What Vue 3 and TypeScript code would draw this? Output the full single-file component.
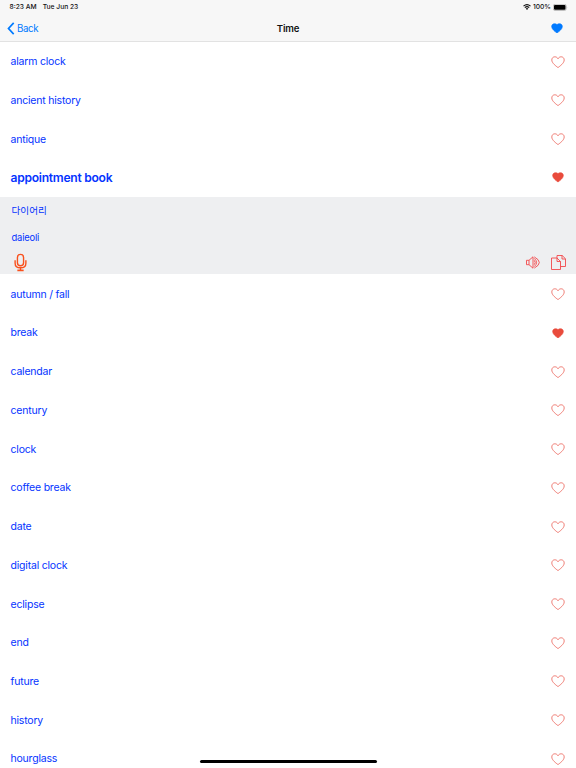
<script setup lang="ts">
import { ref } from 'vue'

interface Word {
  text: string
  liked?: boolean
  native?: string
  roman?: string
}

const words = ref<Word[]>([
  { text: 'alarm clock' },
  { text: 'ancient history' },
  { text: 'antique' },
  { text: 'appointment book', liked: true, native: '다이어리', roman: 'daieoli' },
  { text: 'autumn / fall' },
  { text: 'break', liked: true },
  { text: 'calendar' },
  { text: 'century' },
  { text: 'clock' },
  { text: 'coffee break' },
  { text: 'date' },
  { text: 'digital clock' },
  { text: 'eclipse' },
  { text: 'end' },
  { text: 'future' },
  { text: 'history' },
  { text: 'hourglass' },
])
const opened = ref('appointment book')
const heart =
  'M7 11.6C5.2 10.2 .8 7.2 .8 4C.8 2.1 2.1 .8 3.8 .8C5.3 .8 6.4 1.6 7 2.7C7.6 1.6 8.7 .8 10.2 .8C11.9 .8 13.2 2.1 13.2 4C13.2 7.2 8.8 10.2 7 11.6Z'
const solidHeart =
  'M7 11.5C5.2 10.2 .8 7.2 .8 4C.8 2.1 2.1 .8 3.8 .8C5.3 .8 6.4 1 7 1.8C7.6 1 8.7 .8 10.2 .8C11.9 .8 13.2 2.1 13.2 4C13.2 7.2 8.8 10.2 7 11.5Z'
</script>

<template>
  <div class="screen">
    <header class="top">
      <div class="status">
        <span class="time">8:23 AM</span>
        <span class="day">Tue Jun 23</span>
        <svg class="wifi" viewBox="0 0 8 6">
          <path d="M.5 2.2Q4 -1 7.5 2.2M1.8 3.6Q4 1.7 6.2 3.6" fill="none" stroke="#111" stroke-width="1.1" />
          <path d="M2.7 4.5Q4 3.5 5.3 4.5L4 5.9Z" fill="#111" />
        </svg>
        <span class="percent">100%</span>
        <svg class="battery" viewBox="0 0 15 7">
          <rect x=".3" y=".3" width="12.9" height="6.2" rx="1.7" fill="none" stroke="#999" stroke-width=".6" />
          <rect x="1" y="1" width="11.5" height="4.8" rx="1" fill="#000" />
          <path d="M13.8 2.4Q14.7 3.4 13.8 4.4Z" fill="#999" />
        </svg>
      </div>
      <nav class="nav">
        <div class="back">
          <svg class="chevron" viewBox="0 0 8 13">
            <path d="M6.7 .9L1.5 6.5L6.7 12.1" fill="none" stroke="#007aff" stroke-width="1.7" />
          </svg>
          <span>Back</span>
        </div>
        <h1 class="title">Time</h1>
        <svg class="heart fav" viewBox="0 0 14 12"><path :d="solidHeart" /></svg>
      </nav>
    </header>
    <main>
      <template v-for="w in words" :key="w.text">
        <div class="row" :class="{ open: opened === w.text }" @click="opened = w.text">
          <span>{{ w.text }}</span>
          <svg class="heart" :class="{ liked: w.liked }" viewBox="0 0 14 12">
            <path :d="w.liked ? solidHeart : heart" />
          </svg>
        </div>
        <section v-if="opened === w.text && w.native" class="detail">
          <p class="native">{{ w.native }}</p>
          <p class="roman">{{ w.roman }}</p>
          <div class="tools">
            <svg class="mic" viewBox="0 0 14 19">
              <rect x="3.7" y=".8" width="6.6" height="12.2" rx="3.3" />
              <path d="M1.2 7V10.2C1.2 13.3 3.6 15.2 7 15.2S12.8 13.3 12.8 10.2V7M7 15.2V18" />
              <path d="M3.6 18H10.4" stroke-width="1.8" />
            </svg>
            <svg class="speaker" viewBox="0 0 14 13">
              <path d="M.5 4.3H3L7 .8V12.2L3 8.7H.5ZM3 4.3V8.7" />
              <path d="M8.3 4.3Q10.1 6.5 8.3 8.7M8.3 2.4Q12.9 6.5 8.3 10.6M8.3 .9Q18.3 6.5 8.3 12.1" />
            </svg>
            <svg class="copy" viewBox="0 0 15 15">
              <path d="M6 3V.5H11.2L14.5 3.8V11.5H9.5M11 .5V4H14.5" />
              <path d="M.5 3H6L9.5 6.5V14.5H.5ZM6 3V6.5H9.5" />
            </svg>
          </div>
        </section>
      </template>
    </main>
    <div class="home"></div>
  </div>
</template>

<style>
body {
  overflow: hidden;
}
</style>

<style scoped>
.screen {
  position: relative;
  height: 768px;
  overflow: hidden;
  background: #fff;
  font-family: Inter, "Noto Sans CJK KR", sans-serif;
  color: #0433ff;
}
.top {
  box-sizing: border-box;
  height: 42px;
  background: #f7f7f7;
  border-bottom: 1px solid #e2e2e2;
}
.status {
  display: flex;
  align-items: center;
  height: 14px;
  padding: 0 8.5px 0 9.5px;
  color: #111;
  font-size: 6.7px;
  font-weight: 500;
}
.day {
  margin-left: 6px;
}
.wifi {
  width: 8px;
  height: 6px;
  margin-left: auto;
}
.percent {
  margin: 0 1.5px 0 2px;
}
.battery {
  width: 15px;
  height: 7px;
}
.nav {
  display: grid;
  grid-template-columns: 1fr auto 1fr;
  align-items: center;
  height: 28px;
  padding: 0 12px 0 7px;
  color: #007aff;
  font-size: 9.7px;
}
.back {
  display: flex;
  align-items: center;
  gap: 2px;
  letter-spacing: -0.35px;
}
.chevron {
  width: 8px;
  height: 13px;
}
.title {
  margin: 0 0 0 5px;
  color: #111;
  font-size: 9.6px;
  font-weight: 600;
  letter-spacing: -0.15px;
}
.row {
  display: flex;
  box-sizing: border-box;
  align-items: center;
  justify-content: space-between;
  height: 38.74px;
  padding: 0.7px 11.5px 0 10.5px;
  font-size: 10.5px;
  letter-spacing: -0.2px;
}
.open {
  padding-top: 0;
  font-size: 12.1px;
  font-weight: 600;
  letter-spacing: -0.27px;
}
.heart {
  width: 14px;
  height: 12px;
  fill: none;
  stroke: #eb5f55;
  stroke-width: 0.8;
}
.liked {
  width: 12px;
  height: 10.5px;
  margin-right: 1px;
  fill: #e94b3c;
  stroke: #e94b3c;
}
.fav {
  width: 12px;
  height: 10.5px;
  margin-right: 1px;
  justify-self: end;
  fill: #007aff;
  stroke: #007aff;
}
.detail {
  box-sizing: border-box;
  height: 77.5px;
  padding-top: 7px;
  background: #eeeff1;
}
.native,
.roman {
  height: 14px;
  margin: 0 0 13px;
  padding-left: 11.5px;
  font-size: 9.6px;
  line-height: 14px;
}
.native {
  font-weight: 400;
}
.roman {
  margin-bottom: 0;
  font-size: 9.4px;
  letter-spacing: -0.18px;
}
.tools {
  display: flex;
  align-items: center;
  margin-top: 8px;
  padding: 0 10px 0 14px;
  fill: none;
  stroke: #f2474b;
  stroke-width: 0.9;
}
.mic {
  width: 13px;
  height: 19px;
  stroke: #f9511d;
  stroke-width: 1.5;
}
.speaker {
  width: 14px;
  height: 13px;
  margin: 0 11px 0 auto;
}
.copy {
  width: 15px;
  height: 15px;
}
.home {
  position: absolute;
  bottom: 5px;
  left: 199.5px;
  width: 177px;
  height: 3px;
  border-radius: 2px;
  background: #000;
}
</style>
